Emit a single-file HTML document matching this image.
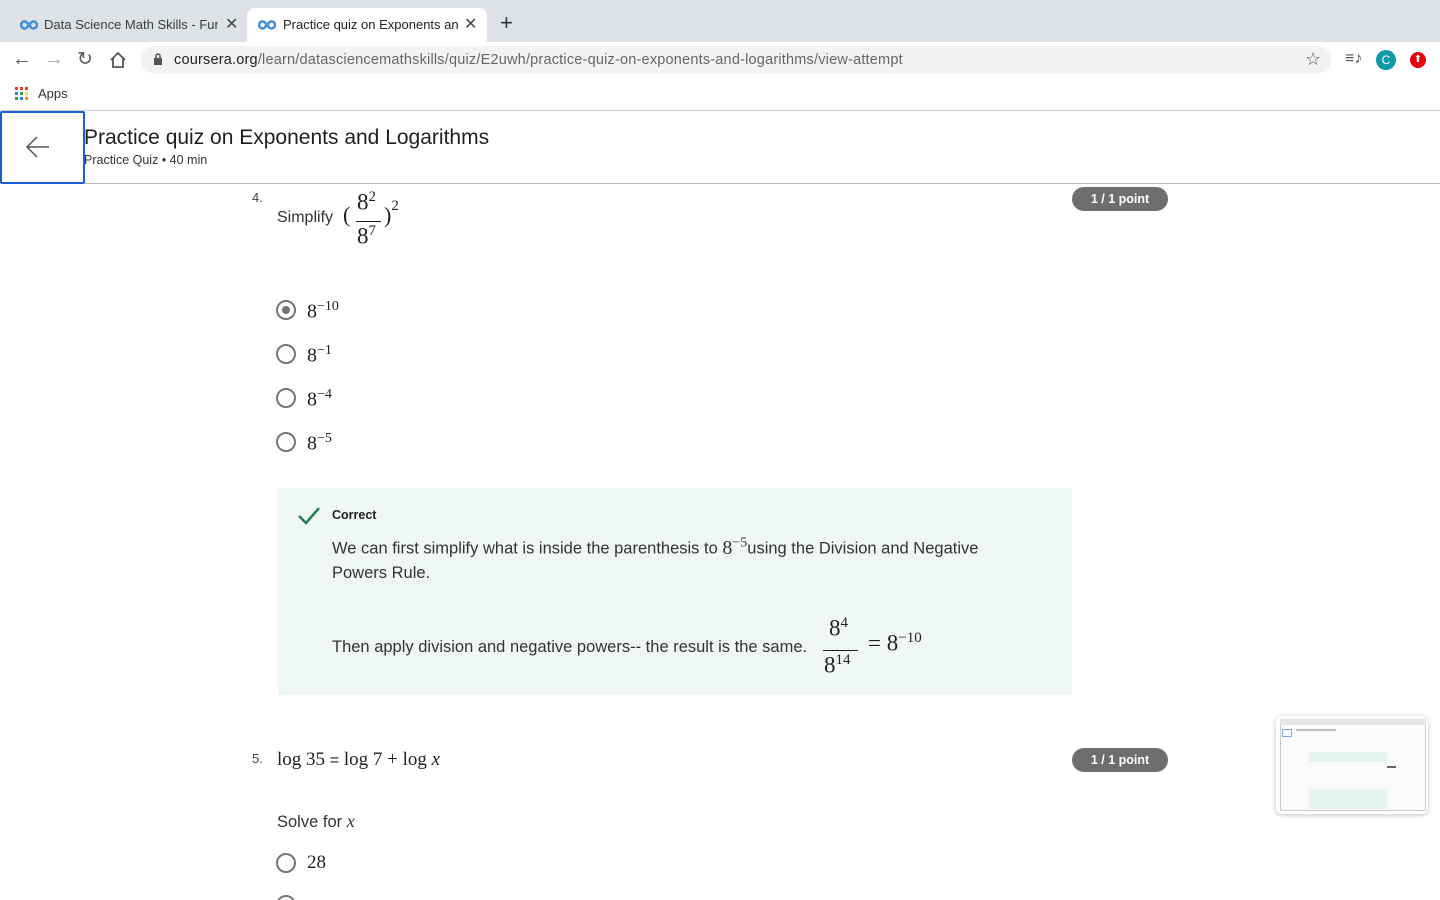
<!DOCTYPE html>
<html><head><meta charset="utf-8"><style>
*{box-sizing:border-box;margin:0;padding:0}
html,body{width:1440px;height:900px;overflow:hidden}
body{background:#fff;font-family:"Liberation Sans",sans-serif;color:#1f1f1f;position:relative}
.abs{position:absolute}
.tm{font-family:"Liberation Serif",serif}
.radio{position:absolute;width:20px;height:20px;border:2px solid #757575;border-radius:50%}
.pill{position:absolute;left:1072px;width:96px;height:24px;border-radius:12px;background:#6e6e6e;color:#fff;font-weight:bold;font-size:12.5px;text-align:center;line-height:24px}
</style></head><body>
<div class="abs" style="left:0;top:0;width:1440px;height:42px;background:#dee1e6"></div>
<div class="abs" style="left:247px;top:8px;width:240px;height:34px;background:#fff;border-radius:8px 8px 0 0"></div>
<svg class="abs" style="left:20px;top:19px" width="18" height="12" viewBox="0 0 18 12"><path d="M8 6a3.5 3.5 0 1 1 0-.1M10 6a3.5 3.5 0 1 0 0-.1" stroke="#3d8ddb" stroke-width="2.4" fill="none"/></svg>
<div class="abs" style="left:44px;top:17px;font-size:13px;color:#3c3c3c;width:174px;white-space:nowrap;overflow:hidden">Data Science Math Skills - Func</div>
<div class="abs" style="left:225px;top:14px;font-size:16px;color:#444">✕</div>
<svg class="abs" style="left:258px;top:19px" width="18" height="12" viewBox="0 0 18 12"><path d="M8 6a3.5 3.5 0 1 1 0-.1M10 6a3.5 3.5 0 1 0 0-.1" stroke="#3d8ddb" stroke-width="2.4" fill="none"/></svg>
<div class="abs" style="left:283px;top:17px;font-size:13px;color:#222;width:176px;white-space:nowrap;overflow:hidden">Practice quiz on Exponents and</div>
<div class="abs" style="left:464px;top:14px;font-size:16px;color:#444">✕</div>
<div class="abs" style="left:500px;top:10px;font-size:22px;color:#333">+</div>
<div class="abs" style="left:0;top:42px;width:1440px;height:68px;background:#fff"></div>
<div class="abs" style="left:12px;top:48px;font-size:20px;color:#555">←</div>
<div class="abs" style="left:44px;top:48px;font-size:20px;color:#aaa">→</div>
<div class="abs" style="left:77px;top:48px;font-size:19px;color:#555">↻</div>
<svg class="abs" style="left:109px;top:51px" width="18" height="18" viewBox="0 0 18 18"><path d="M2 9L9 2l7 7M4 7v9h10V7" stroke="#555" stroke-width="1.8" fill="none"/></svg>
<div class="abs" style="left:141px;top:46px;width:1190px;height:28px;background:#f1f3f4;border-radius:14px"></div>
<svg class="abs" style="left:153px;top:53px" width="10" height="13" viewBox="0 0 10 13"><rect x="1" y="5" width="8" height="7" fill="#555"/><path d="M3 5V3a2 2 0 0 1 4 0v2" stroke="#555" stroke-width="1.5" fill="none"/></svg>
<div class="abs" style="left:174px;top:52px;font-size:14.5px;color:#666;white-space:nowrap;letter-spacing:0.2px"><span style="color:#222">coursera.org</span>/learn/datasciencemathskills/quiz/E2uwh/practice-quiz-on-exponents-and-logarithms/view-attempt</div>
<div class="abs" style="left:1305px;top:49px;font-size:18px;color:#555">☆</div>
<div class="abs" style="left:1345px;top:50px;font-size:16px;color:#555">≡♪</div>
<div class="abs" style="left:1376px;top:50px;width:20px;height:20px;border-radius:50%;background:#0e9aa7;color:#fff;font-size:12px;text-align:center;line-height:20px">C</div>
<div class="abs" style="left:1410px;top:52px;width:16px;height:16px;border-radius:50%;background:#e8000b;color:#fff;font-size:10px;text-align:center;line-height:16px">⬆</div>
<svg class="abs" style="left:15px;top:87px" width="14" height="14"><rect x="0" y="0" width="3" height="3" fill="#e53935"/><rect x="5" y="0" width="3" height="3" fill="#e53935"/><rect x="10" y="0" width="3" height="3" fill="#e53935"/><rect x="0" y="5" width="3" height="3" fill="#1e88e5"/><rect x="5" y="5" width="3" height="3" fill="#43a047"/><rect x="10" y="5" width="3" height="3" fill="#fdd835"/><rect x="0" y="10" width="3" height="3" fill="#43a047"/><rect x="5" y="10" width="3" height="3" fill="#1e88e5"/><rect x="10" y="10" width="3" height="3" fill="#fb8c00"/></svg>
<div class="abs" style="left:38px;top:86px;font-size:13px;color:#333">Apps</div>
<div class="abs" style="left:0;top:110px;width:1440px;height:1px;background:#ccc"></div>
<div class="abs" style="left:0;top:111px;width:85px;height:73px;border:2px solid #1a5fd8;border-radius:2px"></div>
<svg class="abs" style="left:24px;top:135px" width="28" height="24" viewBox="0 0 28 24"><path d="M25 12H3M13 2L3 12l10 10" stroke="#555" stroke-width="1.5" fill="none"/></svg>
<div class="abs" style="left:84px;top:126px;font-size:21px;color:#1f1f1f">Practice quiz on Exponents and Logarithms</div>
<div class="abs" style="left:84px;top:153px;font-size:12.5px;color:#333">Practice Quiz • 40 min</div>
<div class="abs" style="left:84px;top:183px;width:1356px;height:1px;background:#bbb"></div>
<div class="abs" style="left:252px;top:190px;font-size:13px;color:#444">4.</div>
<div class="pill" style="top:187px">1 / 1 point</div>
<div class="abs" style="left:277px;top:209px;font-size:16px;color:#333">Simplify</div>
<div class="abs tm" style="left:343px;top:202px;font-size:22px">(</div>
<div class="abs tm" style="left:357px;top:189px;font-size:23px">8<sup style="font-size:15px">2</sup></div>
<div class="abs" style="left:356px;top:221px;width:25px;height:1px;background:#222"></div>
<div class="abs tm" style="left:357px;top:223px;font-size:23px">8<sup style="font-size:15px">7</sup></div>
<div class="abs tm" style="left:384px;top:202px;font-size:22px">)<sup style="font-size:15px;position:relative;top:-4px">2</sup></div>
<div class="radio" style="left:276px;top:300px"></div><div class="abs" style="left:282px;top:306px;width:8px;height:8px;border-radius:50%;background:#757575"></div>
<div class="abs tm" style="left:307px;top:299px;font-size:20px">8<sup style="font-size:14px">−10</sup></div>
<div class="radio" style="left:276px;top:344px"></div><div class="abs tm" style="left:307px;top:343px;font-size:20px">8<sup style="font-size:14px">−1</sup></div>
<div class="radio" style="left:276px;top:388px"></div><div class="abs tm" style="left:307px;top:387px;font-size:20px">8<sup style="font-size:14px">−4</sup></div>
<div class="radio" style="left:276px;top:432px"></div><div class="abs tm" style="left:307px;top:431px;font-size:20px">8<sup style="font-size:14px">−5</sup></div>
<div class="abs" style="left:277px;top:488px;width:795px;height:207px;background:#f0f8f5"></div>
<svg class="abs" style="left:297px;top:506px" width="24" height="20" viewBox="0 0 24 20"><path d="M2 10l7 7L22 2" stroke="#1f8354" stroke-width="2.5" fill="none"/></svg>
<div class="abs" style="left:332px;top:508px;font-size:12.5px;font-weight:bold;color:#222">Correct</div>
<div class="abs" style="left:332px;top:531px;font-size:16.5px;color:#333;line-height:24px;width:680px">We can first simplify what is inside the parenthesis to <span class="tm" style="font-size:20px">8<sup style="font-size:14px">−5</sup></span>using the Division and Negative Powers Rule.</div>
<div class="abs" style="left:332px;top:638px;font-size:16.5px;color:#333">Then apply division and negative powers-- the result is the same.</div>
<div class="abs tm" style="left:829px;top:615px;font-size:23px">8<sup style="font-size:15px">4</sup></div>
<div class="abs" style="left:823px;top:650px;width:35px;height:1px;background:#222"></div>
<div class="abs tm" style="left:824px;top:652px;font-size:23px">8<sup style="font-size:15px">14</sup></div>
<div class="abs tm" style="left:868px;top:630px;font-size:23px">= 8<sup style="font-size:15px">−10</sup></div>
<div class="abs" style="left:252px;top:751px;font-size:13px;color:#444">5.</div>
<div class="pill" style="top:748px">1 / 1 point</div>
<div class="abs tm" style="left:277px;top:749px;font-size:19px">log 35 <span style="font-family:'Liberation Sans';font-size:16px">=</span> log 7 + log <i>x</i></div>
<div class="abs" style="left:277px;top:811px;font-size:16.5px;color:#333">Solve for <i class="tm" style="font-size:18px">x</i></div>
<div class="radio" style="left:276px;top:853px"></div><div class="abs tm" style="left:307px;top:852px;font-size:19px">28</div>
<div class="radio" style="left:276px;top:895px"></div>
<div class="abs" style="left:1276px;top:716px;width:152px;height:98px;background:#fff;border-radius:6px;box-shadow:0 1px 5px rgba(0,0,0,.25)"></div>
<div class="abs" style="left:1280px;top:719px;width:146px;height:92px;border:1px solid #ccc;background:#fafafa"></div>
<div class="abs" style="left:1280px;top:719px;width:146px;height:6px;background:#e3e5e8"></div>
<div class="abs" style="left:1282px;top:729px;width:10px;height:8px;border:1px solid #7fa7e8"></div>
<div class="abs" style="left:1296px;top:729px;width:40px;height:2px;background:#bbb"></div>
<div class="abs" style="left:1309px;top:752px;width:78px;height:10px;background:#e6f4ee"></div>
<div class="abs" style="left:1309px;top:789px;width:78px;height:20px;background:#e6f4ee"></div>
<div class="abs" style="left:1387px;top:766px;width:9px;height:2px;background:#666"></div>
</body></html>
